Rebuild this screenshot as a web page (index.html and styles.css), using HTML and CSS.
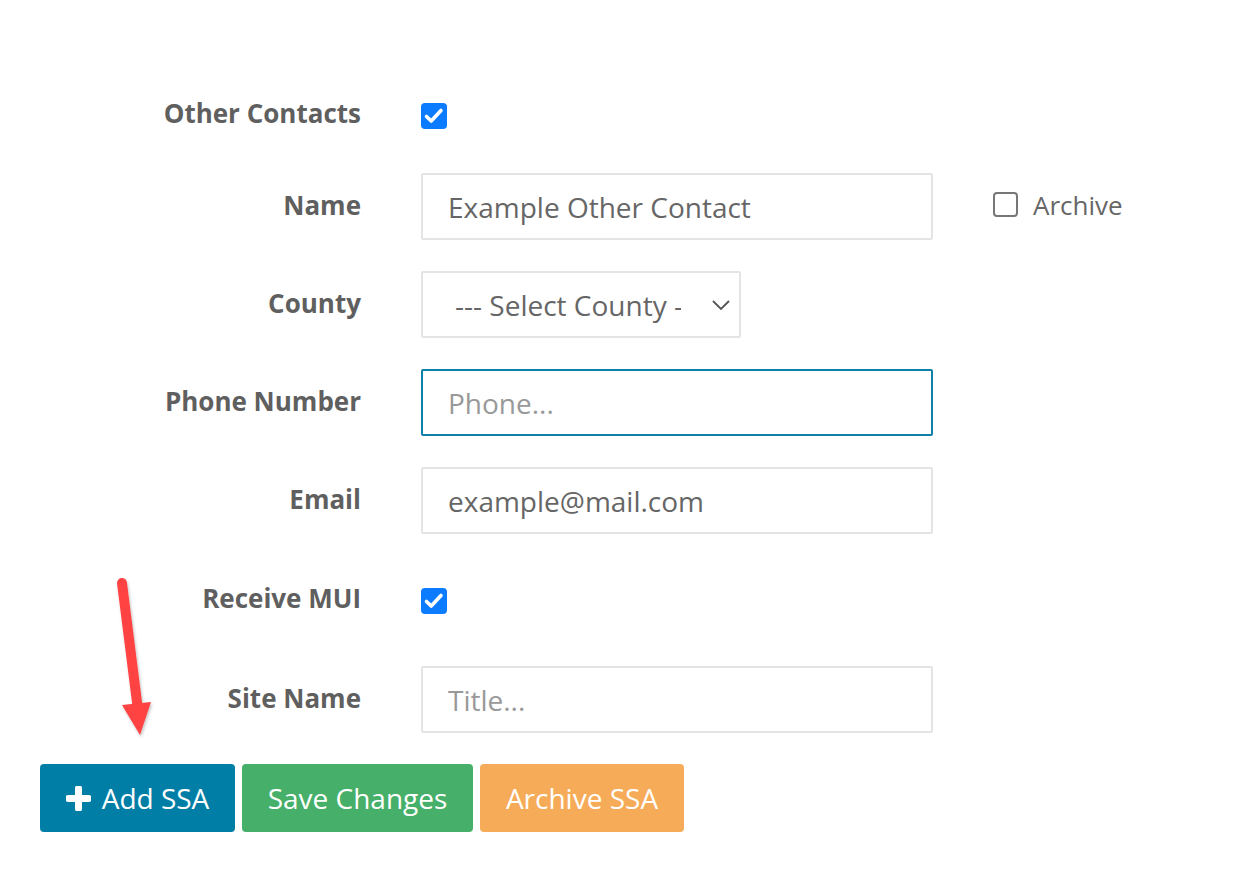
FILE: index.html
```html
<!DOCTYPE html>
<html lang="en">
<head>
<meta charset="utf-8">
<title>Other Contacts</title>
<link rel="stylesheet" href="styles.css">
</head>
<body>
<main class="page">
  <form class="contact-form">
    <div class="field field--check field--first">
      <label class="field-label" for="other-contacts">Other Contacts</label>
      <div class="field-control">
        <span class="checkbox checkbox--on" id="other-contacts">
          <svg viewBox="0 0 26 26" width="26" height="26"><path d="M5.5 13.5 10.2 18 20 7.5" fill="none" stroke="#fff" stroke-width="3.6" stroke-linecap="round" stroke-linejoin="round"/></svg>
        </span>
      </div>
    </div>

    <div class="field">
      <label class="field-label" for="name">Name</label>
      <div class="field-control">
        <input class="text-input" id="name" type="text" value="Example Other Contact">
      </div>
      <div class="field-extra">
        <span class="checkbox checkbox--off"></span>
        <span class="extra-text">Archive</span>
      </div>
    </div>

    <div class="field">
      <label class="field-label" for="county">County</label>
      <div class="field-control">
        <div class="select-wrap">
          <select class="select-input" id="county">
            <option>--- Select County ---</option>
          </select>
          <svg class="select-chevron" viewBox="0 0 20 12" width="20" height="12"><path d="M2 2 10 10 18 2" fill="none" stroke="#555" stroke-width="1.8"/></svg>
        </div>
      </div>
    </div>

    <div class="field">
      <label class="field-label" for="phone">Phone Number</label>
      <div class="field-control">
        <input class="text-input text-input--focus" id="phone" type="text" placeholder="Phone...">
      </div>
    </div>

    <div class="field">
      <label class="field-label" for="email">Email</label>
      <div class="field-control">
        <input class="text-input" id="email" type="text" value="example@mail.com">
      </div>
    </div>

    <div class="field field--check">
      <label class="field-label" for="receive-mui">Receive MUI</label>
      <div class="field-control">
        <span class="checkbox checkbox--on" id="receive-mui">
          <svg viewBox="0 0 26 26" width="26" height="26"><path d="M5.5 13.5 10.2 18 20 7.5" fill="none" stroke="#fff" stroke-width="3.6" stroke-linecap="round" stroke-linejoin="round"/></svg>
        </span>
      </div>
    </div>

    <div class="field">
      <label class="field-label" for="site-name">Site Name</label>
      <div class="field-control">
        <input class="text-input" id="site-name" type="text" placeholder="Title...">
      </div>
    </div>

    <div class="actions">
      <button type="button" class="btn btn--blue">
        <svg viewBox="0 0 25 25" width="25" height="25"><path d="M12.5 2.5v20M2.5 12.5h20" stroke="#fff" stroke-width="7" stroke-linecap="round"/></svg>
        Add SSA
      </button>
      <button type="button" class="btn btn--green">Save Changes</button>
      <button type="button" class="btn btn--orange">Archive SSA</button>
    </div>
  </form>

  <svg class="pointer-arrow" viewBox="0 0 60 180" width="60" height="180">
    <defs>
      <filter id="arrow-shadow" x="-30%" y="-10%" width="160%" height="120%">
        <feDropShadow dx="1" dy="2" stdDeviation="1.5" flood-color="#000" flood-opacity="0.25"/>
      </filter>
    </defs>
    <g filter="url(#arrow-shadow)" fill="#ff4343">
      <path d="M12 10 28 137" stroke="#ff4343" stroke-width="10" stroke-linecap="round"/>
      <path d="M12 132 41 129 30 162Z"/>
    </g>
  </svg>
</main>
</body>
</html>
```

FILE: styles.css
```css
* {
  box-sizing: border-box;
}

html, body {
  margin: 0;
  background: #fff;
}

body {
  font-family: "Open Sans", "Liberation Sans", sans-serif;
  color: #666;
}

.page {
  position: relative;
  width: 1234px;
  height: 884px;
}

.contact-form {
  padding-top: 80px;
  display: flex;
  flex-direction: column;
}

.field {
  display: flex;
  align-items: center;
  height: 67px;
  margin-bottom: 31px;
}

.field--check {
  height: 70px;
}

.field--first {
  margin-bottom: 23px;
}

.field-label {
  width: 361px;
  text-align: right;
  font-size: 26px;
  font-weight: 700;
  color: #5f5f5f;
  line-height: 1;
  padding-bottom: 4px;
}

.field-control {
  margin-left: 60px;
  display: flex;
  align-items: center;
}

.field-extra {
  margin-left: 60px;
  display: flex;
  align-items: center;
  gap: 15px;
  padding-bottom: 4px;
}

.extra-text {
  font-size: 26px;
  color: #666;
}

.checkbox {
  width: 26px;
  height: 26px;
  border-radius: 4px;
  display: inline-flex;
  align-items: center;
  justify-content: center;
}

.checkbox--on {
  background: #0b7bff;
  margin-top: 2px;
}

.checkbox--off {
  border: 2px solid #777;
  width: 25px;
  height: 25px;
}

.text-input,
.select-input {
  height: 67px;
  border: 2px solid #e4e4e4;
  border-radius: 2px;
  padding: 0 25px;
  font-family: inherit;
  font-size: 28px;
  color: #666;
  background: #fff;
  outline: none;
}

.text-input {
  width: 512px;
}

.text-input--focus {
  border-color: #0f80a8;
}

.text-input::placeholder {
  color: #999;
}

.select-wrap {
  position: relative;
  width: 320px;
}

.select-input {
  width: 320px;
  padding-left: 32px;
  padding-right: 58px;
  appearance: none;
  -webkit-appearance: none;
}

.select-chevron {
  position: absolute;
  right: 10px;
  top: 28px;
  pointer-events: none;
}

.actions {
  display: flex;
  gap: 7px;
  padding-left: 40px;
}

.btn {
  height: 68px;
  border: 0;
  border-radius: 4px;
  font-family: inherit;
  font-size: 28px;
  color: #fff;
  display: inline-flex;
  align-items: center;
  justify-content: center;
  gap: 11px;
  padding: 0 20px;
}

.btn--blue {
  width: 195px;
  background: #007ea6;
}

.btn--green {
  width: 231px;
  background: #46af69;
}

.btn--orange {
  width: 204px;
  background: #f6ab58;
}

.pointer-arrow {
  position: absolute;
  left: 110px;
  top: 573px;
}
```
